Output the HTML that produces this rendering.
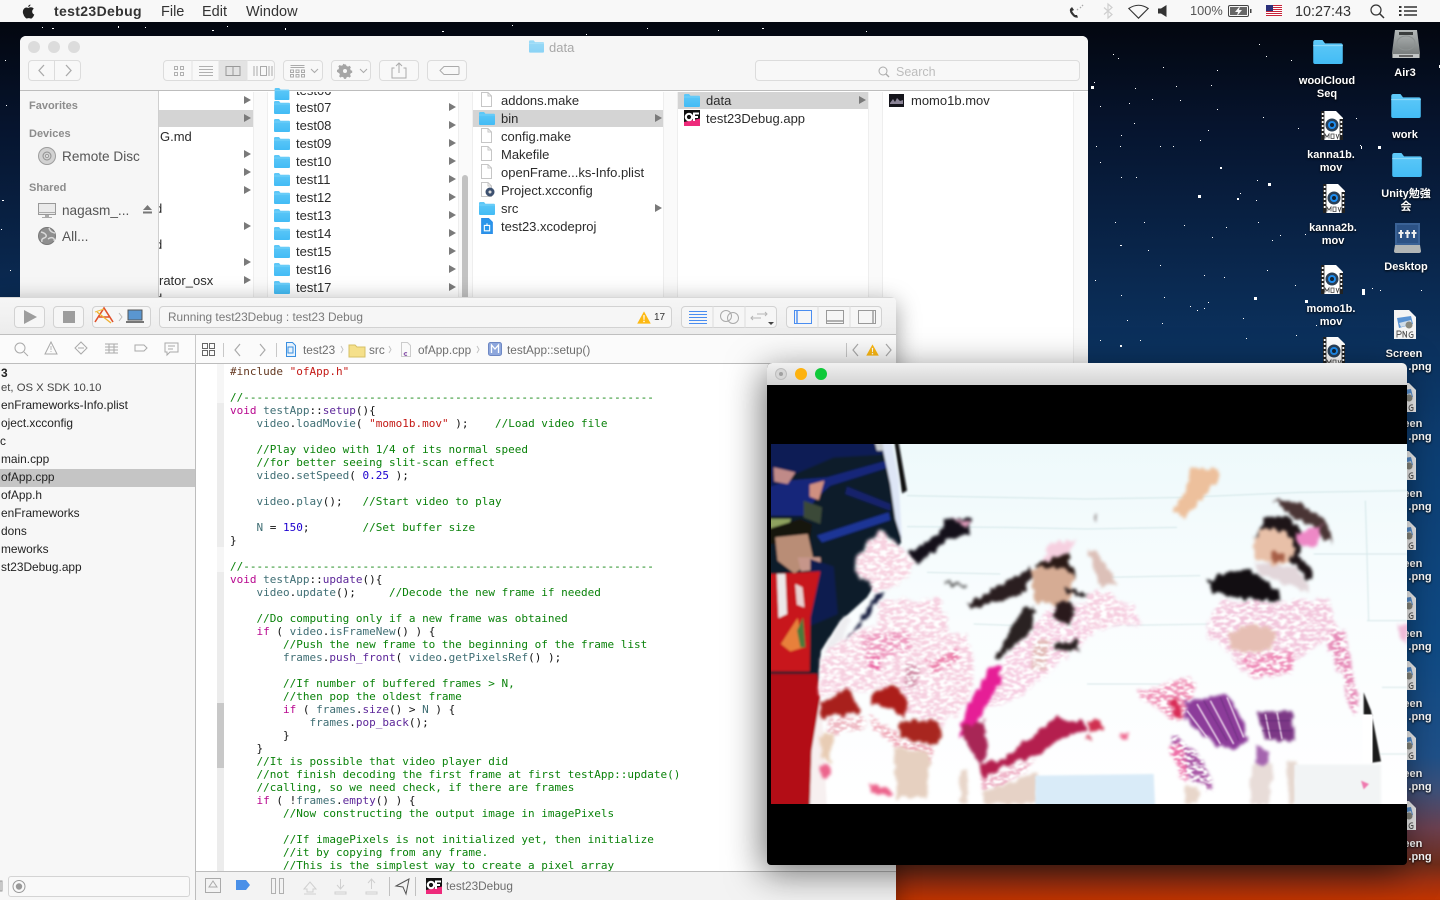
<!DOCTYPE html>
<html><head><meta charset="utf-8"><title>test23Debug</title>
<style>
*{box-sizing:border-box}
html,body{margin:0;padding:0;width:1440px;height:900px;overflow:hidden;font-family:"Liberation Sans","Noto Sans CJK JP",sans-serif}
body{position:relative;background:linear-gradient(180deg,#03060e 2%,#06142e 14%,#0a2a52 32%,#0d3e72 50%,#0f4a84 72%,#1f5088 84%,#3f5078 88%,#6b4050 92%,#6e2c1a 96%,#a03010 98%,#c23400 100%)}
.a{position:absolute}
.t{position:absolute;white-space:nowrap;line-height:18px;font-size:13px;color:#2b2b2b}
.m{position:absolute;top:3px;font-size:14.5px;line-height:18px;color:#333;white-space:nowrap}
.dl{position:absolute;width:80px;text-align:center;font-size:11px;line-height:13px;font-weight:bold;color:#fff;text-shadow:0 1px 2px #000}
.h{position:absolute;font-size:11px;font-weight:bold;color:#8c8c8c;line-height:14px;white-space:nowrap}
svg{position:absolute;overflow:visible}
.btn{position:absolute;height:21px;border:1px solid #dcdcdc;border-radius:4px;background:#f8f8f8}
.xb{position:absolute;height:22px;border:1px solid #d2d2d2;border-radius:4px;background:#f6f6f6}
.tri{position:absolute;width:0;height:0;border-left:7px solid #7a7a7a;border-top:4px solid transparent;border-bottom:4px solid transparent}
.nv{position:absolute;left:1px;font-size:11.9px;line-height:18px;color:#222;white-space:nowrap}
.sb{font-size:13.6px;color:#555}
pre{margin:0;font-family:"DejaVu Sans Mono","Liberation Mono",monospace;font-size:11px;line-height:13px;color:#111}
.c{color:#0a820a}.k{color:#b8078f}.s{color:#c41a16}.n{color:#1c00cf}.v{color:#3f6e74}.f{color:#5c2699}.p{color:#643820}
</style></head><body>

<svg width="0" height="0" style="position:absolute"><defs>
<linearGradient id="fg" x1="0" y1="0" x2="0" y2="1"><stop offset="0" stop-color="#5fc9f8"/><stop offset="1" stop-color="#43bcf5"/></linearGradient>
<linearGradient id="vbg" x1="0" y1="0" x2="0" y2="1"><stop offset="0" stop-color="#eef9fb"/><stop offset=".45" stop-color="#f9fdfe"/><stop offset="1" stop-color="#ffffff"/></linearGradient>
<symbol id="folder" viewBox="0 0 16 13"><path d="M0 1.2Q0 0 1.2 0H5L6.4 1.8H15Q16 1.8 16 2.8V12Q16 13 15 13H1Q0 13 0 12Z" fill="url(#fg)"/><path d="M0 3H16" stroke="#8bdafb" stroke-width=".6"/></symbol>
<symbol id="doc" viewBox="0 0 11 15"><path d="M.5.5H7L10.5 4V14.5H.5Z" fill="#fff" stroke="#c6c6c6"/><path d="M7 .5V4H10.5" fill="none" stroke="#c6c6c6"/></symbol>
<symbol id="mov" viewBox="0 0 22 29"><path d="M0 0H15L22 7V29H0Z" fill="#fff"/><path d="M0 0h3.4v29H0zM18.6 8H22V29H18.6z" fill="#222"/><path d="M.8 2h1.8v2H.8zM.8 6h1.8v2H.8zM.8 10h1.8v2H.8zM.8 14h1.8v2H.8zM.8 18h1.8v2H.8zM.8 22h1.8v2H.8zM19.4 10h1.8v2h-1.8zM19.4 14h1.8v2h-1.8zM19.4 18h1.8v2h-1.8zM19.4 22h1.8v2h-1.8z" fill="#fff"/><circle cx="11" cy="14" r="6.5" fill="#2a3f55"/><circle cx="11" cy="14" r="4" fill="#1e8df0"/><circle cx="11" cy="14" r="2" fill="#123"/><path d="M3.5 22H18.5V28H3.5Z" fill="#fff"/><path d="M4 27.5V23l2 3 2-3v4.5M10 23h3v4.5h-3zM15 23l1.5 4.5L18 23" fill="none" stroke="#444" stroke-width=".8"/></symbol>
<symbol id="png" viewBox="0 0 22 29"><path d="M0 0H15L22 7V29H0Z" fill="#f4f4f4"/><path d="M3 8L17 6 19 14 5 18Z" fill="#5a93d3"/><path d="M5 13L17 10 18 14 7 17Z" fill="#cfdce8"/><circle cx="15" cy="15" r="3.5" fill="#8a8a80"/><path d="M3 27.5V21h2.5a1.6 1.6 0 010 3.5H3M9 27.5V21l3.5 6.5V21M19 22a3 3 0 00-4 2.5q0 3 2.5 3 1.5 0 1.5-1V24.5h-2" fill="none" stroke="#555" stroke-width=".9"/></symbol>
<symbol id="warn" viewBox="0 0 12 11"><path d="M6 .3L11.8 10.7H.2Z" fill="#fdb913"/><path d="M5.4 3.5H6.6L6.4 7.5H5.6ZM5.4 8.3H6.6V9.5H5.4Z" fill="#fff"/></symbol>
<symbol id="of" viewBox="0 0 16 16"><rect width="16" height="16" fill="#111"/><path d="M0 16V12L16 8.5V16Z" fill="#ee2a7b"/><circle cx="5" cy="7" r="3.2" fill="none" stroke="#fff" stroke-width="2.2"/><path d="M10 11V3.5H15M10 7H14" fill="none" stroke="#fff" stroke-width="2"/></symbol>
<filter id="jag" x="-15%" y="-15%" width="130%" height="130%" color-interpolation-filters="sRGB"><feTurbulence type="fractalNoise" baseFrequency=".045 .014" numOctaves="2" seed="4" result="n"/><feDisplacementMap in="SourceGraphic" in2="n" scale="34" xChannelSelector="R" yChannelSelector="G" result="d"/><feGaussianBlur in="d" stdDeviation="5" result="d2"/><feTurbulence type="fractalNoise" baseFrequency=".05 .11" numOctaves="2" seed="9" result="n2"/><feColorMatrix in="n2" type="matrix" values="0 0 0 0 1 0 0 0 0 1 0 0 0 0 1 4 0 0 0 -1.6" result="w"/><feComposite in="w" in2="d2" operator="atop" result="c"/><feGaussianBlur in="c" stdDeviation="2.4"/></filter>
<filter id="soft" x="-15%" y="-15%" width="130%" height="130%" color-interpolation-filters="sRGB"><feTurbulence type="fractalNoise" baseFrequency=".06 .03" numOctaves="2" seed="7" result="n"/><feDisplacementMap in="SourceGraphic" in2="n" scale="26" xChannelSelector="R" yChannelSelector="G" result="d"/><feGaussianBlur in="d" stdDeviation="4.5"/></filter>
<filter id="b2"><feGaussianBlur stdDeviation="2"/></filter>
<filter id="bl"><feGaussianBlur stdDeviation="3"/></filter>
</defs></svg>

<!-- stars -->
<svg style="left:0;top:0" width="1440" height="900"><path fill="#fff" d="M42 27h1v1h-1zM52 28h2v1h-2zM118 26h1v2h-1zM145 27h1v1h-1zM212 30h2v1h-2zM227 26h1v1h-1zM285 28h1v2h-1zM442 31h2v1h-2zM512 25h1v1h-1zM586 34h1v1h-1zM647 28h1v1h-1zM718 30h1v1h-1zM762 28h2v1h-2zM866 31h1v1h-1zM5 60h1v1H5zM6 105h1v1H6zM2 200h2v1H2zM1 229h1v1H1zM10 270h1v1h-1zM1091 86h3v3h-3zM1094 82h1v1h-1zM1113 54h1v1h-1zM1118 58h1v1h-1zM1135 88h1v1h-1zM1163 67h1v1h-1zM1176 86h1v1h-1zM1211 85h1v1h-1zM1217 70h1v1h-1zM1266 56h1v1h-1zM1259 44h1v1h-1zM1291 60h1v1h-1zM1100 106h1v1h-1zM1129 103h1v1h-1zM1152 99h1v1h-1zM1180 100h1v1h-1zM1121 135h1v1h-1zM1134 123h1v1h-1zM1208 130h1v1h-1zM1217 109h1v1h-1zM1263 117h1v1h-1zM1096 146h1v1h-1zM1120 146h1v1h-1zM1173 146h1v1h-1zM1200 140h1v1h-1zM1160 146h1v1h-1zM1100 162h1v1h-1zM1121 177h1v1h-1zM1220 167h2v2h-2zM1268 183h3v3h-3zM1240 193h1v1h-1zM1237 198h2v2h-2zM1256 200h1v1h-1zM1257 180h1v1h-1zM1198 195h3v3h-3zM1136 177h1v1h-1zM1226 227h1v1h-1zM1212 237h1v1h-1zM1144 222h1v1h-1zM1184 225h1v1h-1zM1280 235h1v1h-1zM1258 222h1v1h-1zM1272 240h1v1h-1zM1115 222h1v1h-1zM1148 250h1v1h-1zM1160 265h1v1h-1zM1120 245h2v1h-2zM1204 275h1v1h-1zM1224 277h1v1h-1zM1267 270h1v1h-1zM1095 280h1v1h-1zM1121 295h1v1h-1zM1164 297h1v1h-1zM1190 306h1v1h-1zM1208 302h1v1h-1zM1254 297h3v3h-3zM1362 289h3v6h-3zM1372 288h1v1h-1zM1305 300h3v3h-3zM1295 285h1v1h-1zM1127 320h1v1h-1zM1162 323h1v1h-1zM1197 310h1v1h-1zM1204 308h1v1h-1zM1243 318h1v1h-1zM1100 340h1v1h-1zM1120 345h2v2h-2zM1140 340h1v1h-1zM1246 338h1v1h-1zM1296 335h1v1h-1zM1316 325h1v1h-1zM1395 20h1v1h-1zM1439 65h1v3h-1zM1298 128h1v1h-1zM1361 146h1v3h-1zM1378 146h3v3h-3zM1305 234h1v1h-1zM1421 195h1v1h-1zM1360 145h1v1h-1zM1380 290h1v1h-1zM1421 290h1v1h-1zM1356 118h1v1h-1zM1322 118h1v1h-1z"/></svg>

<!-- desktop icons -->
<svg style="left:1313px;top:40px" width="30" height="24"><use href="#folder" width="30" height="24"/></svg>
<div class="dl" style="left:1287px;top:75px">woolCloud<br>Seq</div>
<svg style="left:1321px;top:111px" width="22" height="29"><use href="#mov" width="22" height="29"/></svg>
<div class="dl" style="left:1291px;top:149px">kanna1b.<br>mov</div>
<svg style="left:1323px;top:184px" width="22" height="29"><use href="#mov" width="22" height="29"/></svg>
<div class="dl" style="left:1293px;top:222px">kanna2b.<br>mov</div>
<svg style="left:1321px;top:265px" width="22" height="29"><use href="#mov" width="22" height="29"/></svg>
<div class="dl" style="left:1291px;top:303px">momo1b.<br>mov</div>
<svg style="left:1323px;top:337px" width="22" height="29"><use href="#mov" width="22" height="29"/></svg>

<svg style="left:1392px;top:29px" width="28" height="30" viewBox="0 0 28 30"><defs><linearGradient id="hd" x1="0" y1="0" x2="0" y2="1"><stop offset="0" stop-color="#b4b9b9"/><stop offset="1" stop-color="#6e7272"/></linearGradient></defs><path d="M3 1H25L28 24V29H0V24Z" fill="url(#hd)"/><path d="M7 3H21V6H7Z" fill="#3b3e3e"/><ellipse cx="14" cy="14" rx="9" ry="7" fill="none" stroke="#8d9292"/><path d="M1 25H27V29H1Z" fill="#c2c5c5"/><path d="M7 26h14v2H7z" fill="#666"/></svg>
<div class="dl" style="left:1365px;top:67px">Air3</div>
<svg style="left:1391px;top:94px" width="30" height="24"><use href="#folder" width="30" height="24"/></svg>
<div class="dl" style="left:1365px;top:129px">work</div>
<svg style="left:1392px;top:153px" width="30" height="24"><use href="#folder" width="30" height="24"/></svg>
<div class="dl" style="left:1366px;top:188px">Unity勉強<br>会</div>
<svg style="left:1394px;top:223px" width="27" height="30" viewBox="0 0 27 30"><path d="M1 0H26V22H1Z" fill="#3a6296"/><path d="M3 2H24V20H3Z" fill="#2c5285"/><path d="M7 7v8M13.5 7v8M20 7v8M4.5 10h5M11 10h5M17.5 10h5" stroke="#eee" stroke-width="2"/><path d="M1 22H26L27 28Q27 30 25 30H2Q0 30 0 28Z" fill="#b2b6b6"/></svg>
<div class="dl" style="left:1366px;top:261px">Desktop</div>
<svg style="left:1394px;top:310px" width="22" height="29"><use href="#png" width="22" height="29"/></svg>
<div class="dl" style="left:1364px;top:348px">Screen<br><span style="position:relative;left:16px">.png</span></div>

<svg style="left:1394px;top:383px" width="22" height="29"><use href="#png" width="22" height="29"/></svg>
<div class="dl" style="left:1364px;top:418px">Screen<br><span style="position:relative;left:16px">.png</span></div>
<svg style="left:1394px;top:451px" width="22" height="29"><use href="#png" width="22" height="29"/></svg>
<div class="dl" style="left:1364px;top:488px">Screen<br><span style="position:relative;left:16px">.png</span></div>
<svg style="left:1394px;top:521px" width="22" height="29"><use href="#png" width="22" height="29"/></svg>
<div class="dl" style="left:1364px;top:558px">Screen<br><span style="position:relative;left:16px">.png</span></div>
<svg style="left:1394px;top:591px" width="22" height="29"><use href="#png" width="22" height="29"/></svg>
<div class="dl" style="left:1364px;top:628px">Screen<br><span style="position:relative;left:16px">.png</span></div>
<svg style="left:1394px;top:661px" width="22" height="29"><use href="#png" width="22" height="29"/></svg>
<div class="dl" style="left:1364px;top:698px">Screen<br><span style="position:relative;left:16px">.png</span></div>
<svg style="left:1394px;top:731px" width="22" height="29"><use href="#png" width="22" height="29"/></svg>
<div class="dl" style="left:1364px;top:768px">Screen<br><span style="position:relative;left:16px">.png</span></div>
<svg style="left:1394px;top:801px" width="22" height="29"><use href="#png" width="22" height="29"/></svg>
<div class="dl" style="left:1364px;top:838px">Screen<br><span style="position:relative;left:16px">.png</span></div>

<!-- FINDER -->
<div class="a" style="left:20px;top:36px;width:1068px;height:500px;background:#fff;border-radius:6px 6px 0 0;overflow:hidden">
  <div class="a" style="left:0;top:0;width:1068px;height:55px;background:#f6f6f6;border-bottom:1px solid #bdbdbd"></div>
  <div class="a" style="left:8px;top:5px;width:12px;height:12px;border-radius:50%;background:#dcdcdc"></div>
  <div class="a" style="left:28px;top:5px;width:12px;height:12px;border-radius:50%;background:#dcdcdc"></div>
  <div class="a" style="left:48px;top:5px;width:12px;height:12px;border-radius:50%;background:#dcdcdc"></div>
  <svg style="left:509px;top:4px" width="15" height="13"><use href="#folder" width="15" height="13" opacity=".6"/></svg>
  <div class="t" style="left:529px;top:3px;color:#a8a8a8">data</div>

  <div class="btn" style="left:8px;top:24px;width:27px;border-radius:4px 0 0 4px"></div>
  <div class="btn" style="left:34px;top:24px;width:27px;border-radius:0 4px 4px 0"></div>
  <svg style="left:8px;top:24px" width="53" height="21"><path d="M16 5l-5 5.5 5 5.5M38 5l5 5.5-5 5.5" fill="none" stroke="#aaa" stroke-width="1.3"/></svg>
  <div class="btn" style="left:143px;top:24px;width:112px"></div>
  <div class="a" style="left:199px;top:25px;width:28px;height:19px;background:#e3e3e3"></div>
  <svg style="left:143px;top:24px" width="112" height="21"><g fill="none" stroke="#b0b0b0"><path d="M11.5 6.5h3v3h-3zM17.5 6.5h3v3h-3zM11.5 12.5h3v3h-3zM17.5 12.5h3v3h-3zM36 6.5h14M36 9.5h14M36 12.5h14M36 15.5h14"/><path d="M63 6.5h14v9H63zM70 6.5v9" stroke="#999"/><path d="M91 6v10M94 6v10M97.5 6.5h6v9h-6zM106 6v10M109 6v10" stroke="#aaa"/><path d="M29 0v21M56 0v21M84 0v21" stroke="#e2e2e2"/></g></svg>
  <div class="btn" style="left:263px;top:24px;width:40px"></div>
  <svg style="left:263px;top:24px" width="40" height="21"><g fill="none" stroke="#aaa"><path d="M7.5 5.5h14M7.5 7.5h14M7.5 10h3v2.5h-3zM13 10h3v2.5h-3zM18.5 10h3v2.5h-3zM7.5 14.5h3v2.5h-3zM13 14.5h3v2.5h-3zM18.5 14.5h3v2.5h-3zM28 9l3.5 3.5L35 9"/></g></svg>
  <div class="btn" style="left:311px;top:24px;width:40px"></div>
  <svg style="left:311px;top:24px" width="40" height="21"><path d="M14 5l1 0 .5 1.500 1.600.6 1.400-.8 1.400 1.400-.8 1.400.6 1.600 1.500.5v2l-1.500.5-.6 1.600.8 1.400-1.400 1.400-1.400-.8-1.600.6-.5 1.500h-2l-.5-1.500-1.600-.6-1.400.8-1.400-1.400.8-1.400-.6-1.600L6 12.400v-2l1.500-.5.6-1.600-.8-1.400 1.400-1.400 1.400.8 1.600-.6.5-1.500z" fill="#a6a6a6" transform="translate(0 -.5)"/><circle cx="14" cy="11" r="2" fill="#f8f8f8"/><path d="M29 9l3.500 3.500L36 9" fill="none" stroke="#aaa"/></svg>
  <div class="btn" style="left:359px;top:24px;width:40px"></div>
  <svg style="left:359px;top:24px" width="40" height="21"><path d="M15.5 8H13V18H27V8H24.5M20 13V3M17 6l3-3 3 3" fill="none" stroke="#aaa"/></svg>
  <div class="btn" style="left:407px;top:24px;width:40px"></div>
  <svg style="left:407px;top:24px" width="40" height="21"><path d="M13 10.5l4-4H31q1 0 1 1v6q0 1-1 1H17z" fill="none" stroke="#aaa"/></svg>
  <div class="btn" style="left:735px;top:24px;width:325px"></div>
  <svg style="left:858px;top:30px" width="12" height="12"><circle cx="5" cy="5" r="4" fill="none" stroke="#aaa"/><path d="M8 8l3 3" stroke="#aaa" stroke-width="1.3"/></svg>
  <div class="t" style="left:876px;top:27px;color:#bdbdbd;font-size:12.5px">Search</div>

  <!-- column 1 -->
  <div class="a" style="left:139px;top:74px;width:94px;height:17px;background:#d4d4d4"></div>
  <div class="t" style="left:140px;top:92px">G.md</div>
  <div class="t" style="left:135px;top:164px">d</div>
  <div class="t" style="left:135px;top:200px">d</div>
  <div class="t" style="left:139px;top:236px">rator_osx</div>
  <div class="t" style="left:135px;top:254px">d</div>
  <div class="tri" style="left:224px;top:60px"></div><div class="tri" style="left:224px;top:78px"></div><div class="tri" style="left:224px;top:114px"></div><div class="tri" style="left:224px;top:132px"></div><div class="tri" style="left:224px;top:150px"></div><div class="tri" style="left:224px;top:186px"></div><div class="tri" style="left:224px;top:222px"></div><div class="tri" style="left:224px;top:240px"></div>
  <div class="a" style="left:233px;top:56px;width:15px;height:444px;background:#fafafa;border-left:1px solid #eee;border-right:1px solid #eee"></div>

  <!-- sidebar -->
  <div class="a" style="left:0;top:55px;width:139px;height:445px;background:#f6f6f6;border-right:1px solid #cfcfcf"></div>
  <div class="h" style="left:9px;top:63px">Favorites</div>
  <div class="h" style="left:9px;top:91px">Devices</div>
  <svg style="left:18px;top:111px" width="18" height="18"><circle cx="9" cy="9" r="8.5" fill="#d2d2d2" stroke="#9d9d9d"/><circle cx="9" cy="9" r="4" fill="none" stroke="#8f8f8f"/><circle cx="9" cy="9" r="1.5" fill="#f4f4f4" stroke="#999"/></svg>
  <div class="t sb" style="left:42px;top:112px">Remote Disc</div>
  <div class="h" style="left:9px;top:145px">Shared</div>
  <svg style="left:18px;top:167px" width="18" height="16"><rect x=".5" y=".5" width="17" height="11" fill="#eaeaea" stroke="#999"/><path d="M.5 9.5h17" stroke="#aaa"/><path d="M7 12h4v2H7z" fill="#aaa"/><path d="M4 14.5h10" stroke="#aaa"/></svg>
  <div class="t sb" style="left:42px;top:166px">nagasm_...</div>
  <svg style="left:123px;top:169px" width="9" height="9"><path d="M4.5 0L9 5H0zM0 6.5h9V8.5H0z" fill="#777"/></svg>
  <svg style="left:18px;top:191px" width="18" height="18"><circle cx="9" cy="9" r="8.5" fill="#8f8f8f" stroke="#777"/><path d="M3 5q4 1 5 3t-2 3-2 4M11 1q1 3 3 4t3 1M10 12q3-2 5-1t1 3" fill="none" stroke="#d9d9d9" stroke-width="1.5"/></svg>
  <div class="t sb" style="left:42px;top:192px">All...</div>

  <!-- column 2 -->
  <div class="a" style="left:248px;top:56px;width:190px;height:8px;overflow:hidden"><div class="t" style="left:28px;top:-10px">test06</div></div>
  <svg style="left:254px;top:52px" width="16" height="12"><use href="#folder" width="16" height="12"/></svg>
  <svg style="left:254px;top:65px" width="16" height="13"><use href="#folder" width="16" height="13"/></svg><div class="t" style="left:276px;top:63px">test07</div>
  <svg style="left:254px;top:83px" width="16" height="13"><use href="#folder" width="16" height="13"/></svg><div class="t" style="left:276px;top:81px">test08</div>
  <svg style="left:254px;top:101px" width="16" height="13"><use href="#folder" width="16" height="13"/></svg><div class="t" style="left:276px;top:99px">test09</div>
  <svg style="left:254px;top:119px" width="16" height="13"><use href="#folder" width="16" height="13"/></svg><div class="t" style="left:276px;top:117px">test10</div>
  <svg style="left:254px;top:137px" width="16" height="13"><use href="#folder" width="16" height="13"/></svg><div class="t" style="left:276px;top:135px">test11</div>
  <svg style="left:254px;top:155px" width="16" height="13"><use href="#folder" width="16" height="13"/></svg><div class="t" style="left:276px;top:153px">test12</div>
  <svg style="left:254px;top:173px" width="16" height="13"><use href="#folder" width="16" height="13"/></svg><div class="t" style="left:276px;top:171px">test13</div>
  <svg style="left:254px;top:191px" width="16" height="13"><use href="#folder" width="16" height="13"/></svg><div class="t" style="left:276px;top:189px">test14</div>
  <svg style="left:254px;top:209px" width="16" height="13"><use href="#folder" width="16" height="13"/></svg><div class="t" style="left:276px;top:207px">test15</div>
  <svg style="left:254px;top:227px" width="16" height="13"><use href="#folder" width="16" height="13"/></svg><div class="t" style="left:276px;top:225px">test16</div>
  <svg style="left:254px;top:245px" width="16" height="13"><use href="#folder" width="16" height="13"/></svg><div class="t" style="left:276px;top:243px">test17</div>
  <div class="tri" style="left:429px;top:67px"></div><div class="tri" style="left:429px;top:85px"></div><div class="tri" style="left:429px;top:103px"></div><div class="tri" style="left:429px;top:121px"></div><div class="tri" style="left:429px;top:139px"></div><div class="tri" style="left:429px;top:157px"></div><div class="tri" style="left:429px;top:175px"></div><div class="tri" style="left:429px;top:193px"></div><div class="tri" style="left:429px;top:211px"></div><div class="tri" style="left:429px;top:229px"></div><div class="tri" style="left:429px;top:247px"></div>
  <div class="a" style="left:438px;top:56px;width:15px;height:444px;background:#fafafa;border-left:1px solid #eee;border-right:1px solid #eee"></div>
  <div class="a" style="left:442px;top:139px;width:6px;height:140px;border-radius:3px;background:#c2c2c2"></div>

  <!-- column 3 -->
  <div class="a" style="left:453px;top:74px;width:190px;height:17px;background:#d4d4d4"></div>
  <svg style="left:461px;top:56px" width="11" height="15"><use href="#doc" width="11" height="15"/></svg><div class="t" style="left:481px;top:56px">addons.make</div>
  <svg style="left:459px;top:76px" width="16" height="13"><use href="#folder" width="16" height="13"/></svg><div class="t" style="left:481px;top:74px">bin</div><div class="tri" style="left:635px;top:78px"></div>
  <svg style="left:461px;top:92px" width="11" height="15"><use href="#doc" width="11" height="15"/></svg><div class="t" style="left:481px;top:92px">config.make</div>
  <svg style="left:461px;top:110px" width="11" height="15"><use href="#doc" width="11" height="15"/></svg><div class="t" style="left:481px;top:110px">Makefile</div>
  <svg style="left:461px;top:128px" width="11" height="15"><use href="#doc" width="11" height="15"/></svg><div class="t" style="left:481px;top:128px">openFrame...ks-Info.plist</div>
  <svg style="left:461px;top:146px" width="15" height="16"><use href="#doc" width="11" height="15"/><circle cx="9" cy="10" r="4.5" fill="#3d5170"/><circle cx="9" cy="10" r="1.5" fill="#ddd"/></svg><div class="t" style="left:481px;top:146px">Project.xcconfig</div>
  <svg style="left:459px;top:166px" width="16" height="13"><use href="#folder" width="16" height="13"/></svg><div class="t" style="left:481px;top:164px">src</div><div class="tri" style="left:635px;top:168px"></div>
  <svg style="left:461px;top:182px" width="12" height="16" viewBox="0 0 11 15"><path d="M.5.5H7L10.5 4V14.5H.5Z" fill="#2a96ea" stroke="#2a8de8"/><path d="M3 7h5v5H3z" fill="none" stroke="#fff"/><path d="M5.5 5v2" stroke="#fff"/></svg><div class="t" style="left:481px;top:182px">test23.xcodeproj</div>
  <div class="a" style="left:643px;top:56px;width:15px;height:444px;background:#fafafa;border-left:1px solid #eee;border-right:1px solid #eee"></div>

  <!-- column 4 -->
  <div class="a" style="left:658px;top:56px;width:190px;height:17px;background:#d4d4d4"></div>
  <svg style="left:664px;top:58px" width="16" height="13"><use href="#folder" width="16" height="13"/></svg><div class="t" style="left:686px;top:56px">data</div><div class="tri" style="left:839px;top:60px"></div>
  <svg style="left:664px;top:74px" width="16" height="16"><use href="#of" width="16" height="16"/></svg><div class="t" style="left:686px;top:74px">test23Debug.app</div>
  <div class="a" style="left:848px;top:56px;width:15px;height:444px;background:#fafafa;border-left:1px solid #eee;border-right:1px solid #eee"></div>

  <!-- column 5 -->
  <svg style="left:869px;top:58px" width="15" height="13"><rect width="15" height="13" fill="#15151c"/><path d="M1 9l3-4 2 3 2-4 3 3 3-1v4H1z" fill="#8a8396"/></svg><div class="t" style="left:891px;top:56px">momo1b.mov</div>
  <div class="a" style="left:1053px;top:56px;width:15px;height:444px;background:#fafafa;border-left:1px solid #eee"></div>
</div>

<!-- XCODE -->
<div class="a" style="left:-6px;top:297px;width:902px;height:640px;background:#fff;border-radius:5px 5px 0 0;box-shadow:0 6px 24px rgba(0,0,0,.4);overflow:hidden">
<div class="a" style="left:6px;top:0;width:896px;height:640px">
  <!-- toolbar -->
  <div class="a" style="left:0;top:0;width:896px;height:38px;background:linear-gradient(#f6f6f6,#ececec);border-bottom:1px solid #bfbfbf;border-top:1px solid #d8d8d8"></div>
  <div class="xb" style="left:14px;top:9px;width:31px"></div>
  <svg style="left:14px;top:9px" width="31" height="22"><path d="M10 4V18L23 11Z" fill="#9d9d9d"/></svg>
  <div class="xb" style="left:53px;top:9px;width:31px"></div>
  <svg style="left:53px;top:9px" width="31" height="22"><rect x="10" y="5" width="12" height="12" fill="#9d9d9d"/></svg>
  <div class="xb" style="left:92px;top:9px;width:59px"></div>
  <svg style="left:92px;top:9px" width="59" height="22"><path d="M3 16L12 2 21 16M7 11H18" fill="none" stroke="#e0502a" stroke-width="1.6"/><path d="M5 6L19 17" stroke="#f0b030" stroke-width="1.3"/><path d="M3 6L12 3" stroke="#f0c040" stroke-width="1"/><path d="M27 7l3 4-3 4" fill="none" stroke="#bbb"/><rect x="36" y="4" width="14" height="10" fill="#5a96d0" stroke="#555"/><path d="M34 15h18v2H34z" fill="#777"/></svg>
  <div class="xb" style="left:159px;top:9px;width:513px"></div>
  <div class="t" style="left:168px;top:11px;font-size:11.85px;color:#7a7a7a">Running test23Debug : test23 Debug</div>
  <svg style="left:637px;top:14px" width="14" height="13"><use href="#warn" width="14" height="13"/></svg>
  <div class="t" style="left:654px;top:12px;font-size:10px;color:#333">17</div>
  <div class="xb" style="left:681px;top:9px;width:96px"></div>
  <svg style="left:681px;top:9px" width="96" height="22"><path d="M8 5.5h18M8 8.5h18M8 11.5h18M8 14.5h18M8 17.5h18" stroke="#4a8df0"/><path d="M32 0v22M64 0v22" stroke="#dcdcdc"/><circle cx="45" cy="10" r="5.5" fill="none" stroke="#aaa"/><circle cx="52" cy="12" r="5.5" fill="none" stroke="#aaa"/><path d="M72 10l-2 2 2 2M70 12H80M84 6l2 2-2 2M86 8H76" fill="none" stroke="#b5b5b5"/><path d="M87 16h6l-3 3z" fill="#444"/></svg>
  <div class="xb" style="left:786px;top:9px;width:96px"></div>
  <svg style="left:786px;top:9px" width="96" height="22"><rect x="8.5" y="4.5" width="17" height="13" fill="none" stroke="#4a8df0"/><path d="M11 5v12" stroke="#4a8df0" stroke-width="1.4"/><path d="M32 0v22M64 0v22" stroke="#dcdcdc"/><rect x="40.5" y="4.5" width="17" height="13" fill="none" stroke="#999"/><path d="M41 15h16" stroke="#999" stroke-width="1.4"/><rect x="72.5" y="4.5" width="17" height="13" fill="none" stroke="#999"/><path d="M87 5v12" stroke="#999" stroke-width="1.4"/></svg>

  <!-- jump bar row -->
  <div class="a" style="left:0;top:38px;width:896px;height:29px;background:#fbfbfb;border-bottom:1px solid #bdbdbd"></div>
  <svg style="left:0;top:38px" width="896" height="29">
    <g fill="none" stroke="#a9a9a9">
      <circle cx="20" cy="13" r="5"/><path d="M24 17l4 4"/>
      <path d="M51 7l6 12H45Z"/><path d="M51 11v4M51 16v1" stroke="#bbb"/>
      <path d="M81 7l6 6-6 6-6-6z"/><path d="M78 13h6"/>
      <path d="M105 9h13M105 12h13M105 15h13M105 18h13M109 9v9M114 9v9"/>
      <path d="M135 10h9l3 3-3 3h-9z"/>
      <path d="M165 8h13v9h-8l-3 3v-3h-2z"/><path d="M168 11h7M168 14h5"/>
    </g>
    <path d="M195.5 0v29" stroke="#c8c8c8"/>
    <path d="M202.5 8.5h5v5h-5zM209.5 8.5h5v5h-5zM202.5 15.5h5v5h-5zM209.5 15.5h5v5h-5z" fill="none" stroke="#666"/>
    <path d="M223.5 8v14M276.5 8v14M846.5 8v14" stroke="#c8c8c8"/>
    <path d="M240 9l-5 6 5 6M260 9l5 6-5 6M858 9l-5 6 5 6M886 9l5 6-5 6" fill="none" stroke="#aaa" stroke-width="1.2"/>
    <path d="M286.5 7.5h6l3 3v11h-9z" fill="#e8f3fd" stroke="#3a8fe0"/><rect x="288" y="12" width="5" height="6" fill="none" stroke="#3a8fe0"/>
    <path d="M349 10h6l2 2h8v10h-16z" fill="#f5e08a" stroke="#d6c066"/>
    <path d="M401.5 7.5h6l3 3v11h-9z" fill="#fafafa" stroke="#ccc"/>
    <path d="M404 19a2 2 0 013-1M404 19a2 2 0 003 1" fill="none" stroke="#7a3fa0"/>
    <rect x="488.5" y="7.5" width="13" height="13" rx="2" fill="#8ea7dc" stroke="#6e88c4"/>
    <path d="M491.5 18v-8l3.5 4 3.5-4v8" fill="none" stroke="#fff" stroke-width="1.3"/>
    <path d="M341 11l2 3.5-2 3.5M389 11l2 3.5-2 3.5M477 11l2 3.5-2 3.5" fill="none" stroke="#c4c4c4"/>
  </svg>
  <svg style="left:866px;top:47px" width="13" height="12"><use href="#warn" width="13" height="12"/></svg>
  <div class="t" style="left:303px;top:44px;font-size:11.8px;color:#6e6e6e">test23</div>
  <div class="t" style="left:369px;top:44px;font-size:11.8px;color:#6e6e6e">src</div>
  <div class="t" style="left:418px;top:44px;font-size:11.8px;color:#6e6e6e">ofApp.cpp</div>
  <div class="t" style="left:507px;top:44px;font-size:11.8px;color:#6e6e6e">testApp::setup()</div>

  <!-- navigator -->
  <div class="a" style="left:0;top:67px;width:196px;height:574px;background:#f7f7f7;border-right:1px solid #bdbdbd"></div>
  <div class="a" style="left:0;top:172px;width:195px;height:18px;background:#c5c5c5"></div>
  <div class="nv" style="top:67px;font-weight:bold;left:1px">3</div>
  <div class="nv" style="top:82px;left:1px;color:#444;font-size:11.3px">et, OS X SDK 10.10</div>
  <div class="nv" style="top:99px">enFrameworks-Info.plist</div>
  <div class="nv" style="top:117px">oject.xcconfig</div>
  <div class="nv" style="top:135px;left:0">c</div>
  <div class="nv" style="top:153px">main.cpp</div>
  <div class="nv" style="top:171px">ofApp.cpp</div>
  <div class="nv" style="top:189px">ofApp.h</div>
  <div class="nv" style="top:207px">enFrameworks</div>
  <div class="nv" style="top:225px">dons</div>
  <div class="nv" style="top:243px">meworks</div>
  <div class="nv" style="top:261px">st23Debug.app</div>

  <div class="a" style="left:8px;top:579px;width:182px;height:21px;border:1px solid #d4d4d4;border-radius:3px;background:#f9f9f9"></div>
  <svg style="left:0;top:579px" width="30" height="21"><path d="M0 5h2v10H0z" fill="none" stroke="#999"/><circle cx="19" cy="10.5" r="6" fill="none" stroke="#999"/><circle cx="19" cy="10.5" r="3.2" fill="#999"/></svg>

  <!-- editor ribbon -->
  <div class="a" style="left:196px;top:67px;width:21px;height:507px;background:#fff"></div>
  <div class="a" style="left:217px;top:67px;width:7px;height:507px;background:#f6f6f6"></div>
  <div class="a" style="left:217px;top:106px;width:7px;height:144px;background:#ececec"></div>
  <div class="a" style="left:217px;top:275px;width:7px;height:299px;background:#ececec"></div>
  <div class="a" style="left:217px;top:406px;width:7px;height:65px;background:#c8c8c8"></div>

  <pre class="a" style="left:230px;top:68px;height:506px;overflow:hidden;width:540px"><span class="p">#include</span> <span class="s">"ofApp.h"</span>

<span class="c">//--------------------------------------------------------------</span>
<span class="k">void</span> <span class="v">testApp</span>::<span class="f">setup</span>(){
    <span class="v">video</span>.<span class="v">loadMovie</span>( <span class="s">"momo1b.mov"</span> );    <span class="c">//Load video file</span>

    <span class="c">//Play video with 1/4 of its normal speed</span>
    <span class="c">//for better seeing slit-scan effect</span>
    <span class="v">video</span>.<span class="v">setSpeed</span>( <span class="n">0.25</span> );

    <span class="v">video</span>.<span class="v">play</span>();   <span class="c">//Start video to play</span>

    <span class="v">N</span> = <span class="n">150</span>;        <span class="c">//Set buffer size</span>
}

<span class="c">//--------------------------------------------------------------</span>
<span class="k">void</span> <span class="v">testApp</span>::<span class="f">update</span>(){
    <span class="v">video</span>.<span class="v">update</span>();     <span class="c">//Decode the new frame if needed</span>

    <span class="c">//Do computing only if a new frame was obtained</span>
    <span class="k">if</span> ( <span class="v">video</span>.<span class="v">isFrameNew</span>() ) {
        <span class="c">//Push the new frame to the beginning of the frame list</span>
        <span class="v">frames</span>.<span class="f">push_front</span>( <span class="v">video</span>.<span class="v">getPixelsRef</span>() );

        <span class="c">//If number of buffered frames &gt; N,</span>
        <span class="c">//then pop the oldest frame</span>
        <span class="k">if</span> ( <span class="v">frames</span>.<span class="f">size</span>() &gt; <span class="v">N</span> ) {
            <span class="v">frames</span>.<span class="f">pop_back</span>();
        }
    }
    <span class="c">//It is possible that video player did</span>
    <span class="c">//not finish decoding the first frame at first testApp::update()</span>
    <span class="c">//calling, so we need check, if there are frames</span>
    <span class="k">if</span> ( !<span class="v">frames</span>.<span class="f">empty</span>() ) {
        <span class="c">//Now constructing the output image in imagePixels</span>

        <span class="c">//If imagePixels is not initialized yet, then initialize</span>
        <span class="c">//it by copying from any frame.</span>
        <span class="c">//This is the simplest way to create a pixel array</span></pre>

  <!-- debug bar -->
  <div class="a" style="left:196px;top:574px;width:700px;height:30px;background:#f3f3f3;border-top:1px solid #bdbdbd"></div>
  <svg style="left:196px;top:574px" width="330" height="30">
    <rect x="9.5" y="7.5" width="15" height="14" fill="none" stroke="#aaa"/><path d="M17 10l-4 6h8z" fill="none" stroke="#aaa"/>
    <path d="M40 9h10l4 5-4 5H40z" fill="#4a90e8"/>
    <path d="M75.5 7.5h4v15h-4zM83.5 7.5h4v15h-4z" fill="none" stroke="#b0b0b0"/>
    <path d="M108 18l6-7 6 7h-3v3h-6v-3zM108 23h12" fill="none" stroke="#d0d0d0"/>
    <path d="M144.5 8v10M141 14l3.5 4 3.5-4M139 21h11v2h-11z" fill="none" stroke="#d0d0d0"/>
    <path d="M175.5 8v10M172 12l3.5-4 3.5 4M170 21h11v2h-11z" fill="none" stroke="#d0d0d0"/>
    <path d="M193.5 6v19M219.5 6v19" stroke="#c0c0c0"/>
    <path d="M200 15L213 8 210 23 207 16Z" fill="none" stroke="#555"/>
  </svg>
  <svg style="left:426px;top:581px" width="16" height="16"><use href="#of" width="16" height="16"/></svg>
  <div class="t" style="left:446px;top:580px;font-size:11.8px;color:#6e6e6e">test23Debug</div>
</div></div>

<!-- VIDEO WINDOW -->
<div class="a" style="left:767px;top:363px;width:640px;height:502px;background:#000;border-radius:5px 5px 4px 4px;box-shadow:-4px 8px 36px rgba(0,0,0,.55);overflow:hidden">
  <div class="a" style="left:0;top:0;width:640px;height:22px;background:linear-gradient(#f1f1f1,#d3d3d3)"></div>
  <svg style="left:8px;top:5px" width="60" height="12"><circle cx="6" cy="6" r="5.5" fill="#d6d6d6" stroke="#bdbdbd"/><circle cx="6" cy="6" r="2" fill="#a0a0a0"/><circle cx="26" cy="6" r="6" fill="#fdb20e"/><circle cx="46" cy="6" r="6" fill="#0fc93a"/></svg>
  <div class="a" style="left:0;top:81px;width:640px;height:360px;overflow:hidden;background:#000">
  <svg style="left:0;top:0" width="640" height="360" viewBox="0 0 1920 1080">
    <rect x="12" y="0" width="1908" height="1080" fill="url(#vbg)"/>
    <!-- wall lines -->
    <g stroke="#b4d2d4" stroke-width="3" fill="none" opacity=".5" filter="url(#b2)">
      <path d="M420 155L960 165 1250 160 1600 145 1920 140"/>
      <path d="M420 248L720 250 960 255 1230 250"/>
      <path d="M480 385L700 390"/><path d="M1640 330H1920"/>
      <path d="M1795 170L1800 330 1805 530"/><path d="M1000 400L1300 395"/>
      <path d="M620 540L760 545"/><path d="M1000 545L1340 540"/><path d="M1800 530H1920"/>
      <path d="M960 720H1180"/><path d="M1845 730H1920"/><path d="M1840 930H1920"/>
    </g>
    <!-- LEFT scene -->
    <path d="M0 0H360V300H240L150 600 120 1080H0Z" fill="#0e1d2b"/>
    <g filter="url(#bl)">
      <path d="M-20 -20H372L382 120 402 240 402 295 300 460 222 530 162 620 150 760 130 1100H-20Z" fill="#0e1d2b"/>
      <path d="M-20 -20H370V30L200 40 60 100 -20 150Z" fill="#0f1d55"/>
      <path d="M-20 140L60 110 180 100 360 50 365 70 190 125 150 160 110 215H-20Z" fill="#16257a"/>
      <path d="M150 275L365 205 370 228 165 295Z" fill="#1c3496"/>
      <path d="M240 128L370 180 370 200 235 150Z" fill="#16246c"/>
      <path d="M340 -20H372L395 110 405 290 385 225 370 120Z" fill="#dee6f6"/>
      <path d="M380 -20H392L420 140 405 148Z" fill="#08080e"/>
      <path d="M320 -20H345L350 20 330 20Z" fill="#c7ccd0"/>
      <path d="M20 70L85 85 62 120 22 112Z" fill="#c08a88"/>
      <path d="M128 122L172 110 155 168 128 158Z" fill="#d09080"/>
      <path d="M-20 225H72L60 255 -20 265Z" fill="#8ea25f"/>
      <path d="M110 170L165 190 160 240 110 220Z" fill="#3b4a38"/>
      <path d="M-20 262L100 225 135 240 130 285 -20 305Z" fill="#15120e"/>
      <path d="M25 280L122 270 140 350 82 388 32 350Z" fill="#b98d76"/>
      <path d="M92 340L160 340 162 375 102 382Z" fill="#c6968a"/>
      <path d="M130 345L200 368 212 510 130 545Z" fill="#111f50"/>
      <path d="M-20 392L160 382 130 520 128 682 -20 682Z" fill="#c8181e"/>
      <path d="M30 390L55 390 60 510 35 522Z" fill="#ece8e8"/>
      <path d="M85 420L106 430 112 490 90 482Z" fill="#e9d0d0"/>
      <path d="M42 600L92 522 110 610 70 622Z" fill="#e8803a"/>
      <path d="M90 560L108 520 115 610 100 610Z" fill="#4a7a3a"/>
      <path d="M-20 690H150L162 780 125 1100 -20 1100Z" fill="#b30f18"/>
      <path d="M128 1100L134 920 160 760 170 880 180 1100Z" fill="#f7f0f0"/>
    </g>
    <rect x="0" y="0" width="12" height="1080" fill="#000"/>
    <g filter="url(#soft)">
      <path d="M420 332L515 272 530 225 612 222 612 268 540 290 450 362Z" fill="#14101a"/>
      <path d="M555 222L612 235 600 252Z" fill="#e6a0c0"/>
      <path d="M220 620L330 450 355 440 250 585Z" fill="#0f1638"/>
      <path d="M168 622L235 515 252 530 200 632Z" fill="#ededf0"/>
      <path d="M530 412L600 420 600 428 532 420Z" fill="#444"/>
    </g>
    <g filter="url(#jag)">
      <path d="M265 340L340 250 400 310 445 355 420 400 335 450 265 380Z" fill="#f7d2e0"/>
      <path d="M340 470L520 465 545 570 600 570 622 680 600 780 520 850 400 800 340 730 250 740 158 752 160 640 280 550 330 555Z" fill="#f6d0e0"/>
      <path d="M280 572L432 560 432 612 300 662Z" fill="#ee9cc0"/>
      <path d="M480 650L572 618 578 652 492 682Z" fill="#ec82ac"/>
      <path d="M300 640L342 640 332 682 302 682Z" fill="#ea66a2"/>
      <path d="M418 660L455 660 450 730 420 730Z" fill="#d08fa8"/>
      <path d="M700 660L782 560 850 490 960 480 1000 500 1080 470 1125 540 1000 550 900 640 840 690 760 760 640 800 610 800Z" fill="#f6cee2"/>
      <path d="M800 590L852 580 832 680 792 680Z" fill="#e2bcb8"/>
      <path d="M180 822L282 810 300 852 240 862 180 882Z" fill="#eeb8c2"/>
      <path d="M310 812L402 880 502 910 492 962 360 892 320 852Z" fill="#f0acba"/>
      <path d="M640 1002L800 950 782 982 650 1052Z" fill="#efb4c8"/>
    </g>
    <g filter="url(#soft)">
      <path d="M160 782L240 730 282 802 170 822Z" fill="#a8201c"/>
      <path d="M310 752L380 720 422 770 412 822 370 790 310 782Z" fill="#ac1e1a"/>
      <path d="M400 830L510 830 522 880 500 902 400 882Z" fill="#a8261f"/>
      <path d="M150 882L200 860 190 960 165 942Z" fill="#e8ccb4"/>
      <path d="M380 905L490 932 480 1062 390 1062Z" fill="#e6d0c0"/>
      <path d="M160 965L190 965 180 1006 165 1000Z" fill="#ec648c"/>
      <path d="M305 1015L375 1040 375 1058 315 1046Z" fill="#ec648c"/>
      <path d="M670 670L705 665 700 712 612 862 575 882 590 810Z" fill="#e61e96"/>
      <path d="M582 850L650 830 662 910 642 962 592 882Z" fill="#a82656"/>
      <path d="M640 962L700 950 790 880 870 815 902 830 960 835 960 856 882 880 820 932 700 972 650 1002Z" fill="#b41f4e"/>
      <path d="M575 982L605 975 600 1080 580 1080Z" fill="#e8d6ca"/>
      <path d="M650 1042L810 982 812 1080 650 1080Z" fill="#e6d2c6"/>
      <path d="M602 480L790 370 792 402 762 452 622 492Z" fill="#2a1e20"/>
      <path d="M790 382L880 322 922 402 902 492 802 472Z" fill="#d6ac94"/>
      <path d="M802 362L902 310 922 400 882 372 832 372Z" fill="#2a1a16"/>
      <path d="M895 430L960 452 960 460 895 445Z" fill="#1e1618"/>
      <path d="M870 470L922 480 902 545 862 522Z" fill="#2a1a1c"/>
      <path d="M680 642L770 490 802 490 792 562 702 642Z" fill="#2a2222"/>
      <path d="M860 600L930 590 936 620 860 620Z" fill="#2a2222"/>
      <path d="M845 300L930 290 900 330 830 350Z" fill="#f6d0e0"/>
    </g>
    <path d="M805 995L1160 990 1165 1100H805Z" fill="#d9ebf8" filter="url(#bl)"/>

    <!-- RIGHT scene -->
    <g transform="translate(960 0)">
      <g filter="url(#jag)">
        <path d="M0 450L60 440 110 480 125 540 0 550Z" fill="#f6cfe0"/>
        <path d="M360 542L400 470 580 470 722 470 762 560 642 642 562 692 462 682 422 622 360 572Z" fill="#f2c6dc"/>
        <path d="M720 570L772 560 812 762 802 816 772 722 732 622Z" fill="#e68cb8"/>
        <path d="M460 640L620 620 610 690 490 700Z" fill="#ee8cb8"/>
        <path d="M150 742L300 702 332 722 292 832 232 812Z" fill="#f094b8"/>
        <path d="M255 872L310 902 372 992 362 1042 322 1012 272 962Z" fill="#a858a6"/>
        <path d="M250 900L286 900 302 1012 282 1002Z" fill="#ee70a8"/>
      </g>
      <g filter="url(#soft)">
        <path d="M260 205L310 110 310 70 395 80 390 110 355 150 292 222Z" fill="#edc09c"/>
        <path d="M0 322L30 320 80 400 90 420 40 430 15 360Z" fill="#dcc0b8"/>
        <path d="M20 210L25 210 25 228 20 228ZM560 168L640 175 722 240 736 302 682 252 610 212Z" fill="#4a3535"/>
        <path d="M505 282L530 220 600 215 642 262 632 332 672 372 672 412 642 382 560 302 510 302Z" fill="#1e1518"/>
        <path d="M495 312L520 250 600 265 626 312 610 352 560 366 510 342Z" fill="#e8c0a8"/>
        <path d="M550 322L590 326 590 356 556 350Z" fill="#a65e46"/>
        <path d="M625 272L700 245 690 302 640 312Z" fill="#ee88c6"/>
        <path d="M500 356L620 370 670 422 660 442 520 392Z" fill="#e2d6da"/>
        <path d="M360 412L420 385 490 375 572 440 578 472 450 462 380 442Z" fill="#120e12"/>
        <path d="M420 572L490 540 570 562 550 622 440 622Z" fill="#e6bfb4"/>
        <path d="M250 770L270 760 292 825 262 812Z" fill="#d82c56"/>
        <path d="M292 772L422 752 472 832 482 892 442 916 382 902 302 832Z" fill="#8c3c9a"/>
        <path d="M512 806L612 800 622 892 532 886Z" fill="#7c3886"/>
        <path d="M502 902L542 922 542 962 512 962Z" fill="#a464ae"/>
        <path d="M492 962L560 962 542 1080 492 1080Z" fill="#e8dcd8"/>
        <path d="M600 952L626 952 636 1080 606 1080Z" fill="#e6d8d0"/>
        <path d="M296 1022L332 1032 332 1080 290 1080Z" fill="#e8d6ca"/>
        <path d="M0 832L45 826 48 856 10 862ZM0 876H15V890H0Z" fill="#d03050"/>
        <path d="M100 868L125 872 125 886 100 886Z" fill="#ee6a90"/>
        <path d="M930 540H960V596L945 590Z" fill="#f0bcd8"/>
      </g>
      <g stroke="#f6e6f4" stroke-width="4" fill="none" filter="url(#b2)"><path d="M330 780L400 900M370 770L440 900M420 760L470 880M300 800L360 880M535 810L550 885M570 805L585 885"/></g>
      <g stroke="#5a2a70" stroke-width="2.5" fill="none" opacity=".7" filter="url(#b2)"><path d="M350 770L420 890M400 760L455 890M520 830L610 830M525 860L615 860"/></g>
      <path d="M622 962H882V1100H622Z" fill="#f2f4f5" filter="url(#bl)"/>
      <path d="M830 745L852 800 882 952 856 956 856 812 830 812Z" fill="#1e1e1e" filter="url(#b2)"/>
      <path d="M826 812H856V956H826Z" fill="#fff"/>
      <path d="M822 1010L846 1020 830 1036Z" fill="#ef78ae" filter="url(#b2)"/>
    </g>
  </svg>
  </div>
</div>

<!-- MENU BAR -->
<div class="a" style="left:0;top:0;width:1440px;height:22px;background:#f8f8f8"></div>
<svg style="left:21px;top:3px" width="14" height="16" viewBox="0 0 14 16"><path d="M9.5 1.5Q9.5 3.3 7.2 4 7.1 2 9.5 1.5ZM7.2 5Q8.5 4.3 10 4.3 11.8 4.4 12.8 5.8 11 7 11.2 8.9 11.4 10.8 13.3 11.6 12.6 13.4 11.4 14.8 10.4 16 9.2 15.4 8 14.8 6.8 15.3 5.6 15.9 4.6 14.9 2.7 13 2 10.2 1.4 7.3 3.2 5.5 4.9 3.9 7.2 5Z" fill="#222"/></svg>
<div class="m" style="left:54px;top:2px;font-weight:bold;font-size:14px;letter-spacing:.35px">test23Debug</div>
<div class="m" style="left:161px">File</div>
<div class="m" style="left:202px">Edit</div>
<div class="m" style="left:246px">Window</div>
<svg style="left:1068px;top:3px" width="18" height="17"><path d="M2 6Q1 9 5 13 7 15 10 14.5L9 12 7 12Q5 10 4 8L6 7 4 4Z" fill="#333"/><path d="M9 7l1-1M12 5l1-1M14 3l1-1" stroke="#aaa" stroke-width="1.3"/></svg>
<svg style="left:1103px;top:3px" width="10" height="16"><path d="M1 4.5L9 11.5 5 15V1L9 4.5 1 11.5" fill="none" stroke="#cfcfcf" stroke-width="1.2"/></svg>
<svg style="left:1128px;top:4px" width="21" height="15"><path d="M.8 4.5Q10.5-2 20.2 4.5L10.5 14.2Z" fill="none" stroke="#333" stroke-width="1.1"/></svg>
<svg style="left:1158px;top:5px" width="10" height="12"><path d="M0 3.5H3L8.5 0V12L3 8.5H0Z" fill="#333"/></svg>
<div class="m" style="left:1190px;top:2px;font-size:12.8px;color:#555">100%</div>
<svg style="left:1228px;top:5px" width="24" height="12"><rect x=".5" y=".5" width="20" height="11" rx="1.5" fill="#f8f8f8" stroke="#444"/><rect x="2" y="2" width="17" height="8" fill="#666"/><path d="M12 1L7 7H10L9 11 14 5H11Z" fill="#f8f8f8"/><path d="M22 4h1.5v4H22z" fill="#444"/></svg>
<svg style="left:1266px;top:5px" width="16" height="11"><rect width="16" height="11" fill="#c8243a"/><path d="M0 1.5h16M0 3.5h16M0 5.5h16M0 7.5h16M0 9.5h16" stroke="#fff"/><rect width="7" height="6" fill="#2a2f7a"/></svg>
<div class="m" style="left:1295px;color:#333;font-size:14.4px">10:27:43</div>
<svg style="left:1370px;top:4px" width="15" height="15"><circle cx="6" cy="6" r="5" fill="none" stroke="#333" stroke-width="1.2"/><path d="M9.5 9.5L14 14" stroke="#333" stroke-width="1.5"/></svg>
<svg style="left:1399px;top:5px" width="19" height="12"><path d="M0 1h2.5v2H0zM0 5h2.5v2H0zM0 9h2.5v2H0z" fill="#333"/><path d="M5 2h13M5 6h13M5 10h13" stroke="#333" stroke-width="1.5"/></svg>
</body></html>
